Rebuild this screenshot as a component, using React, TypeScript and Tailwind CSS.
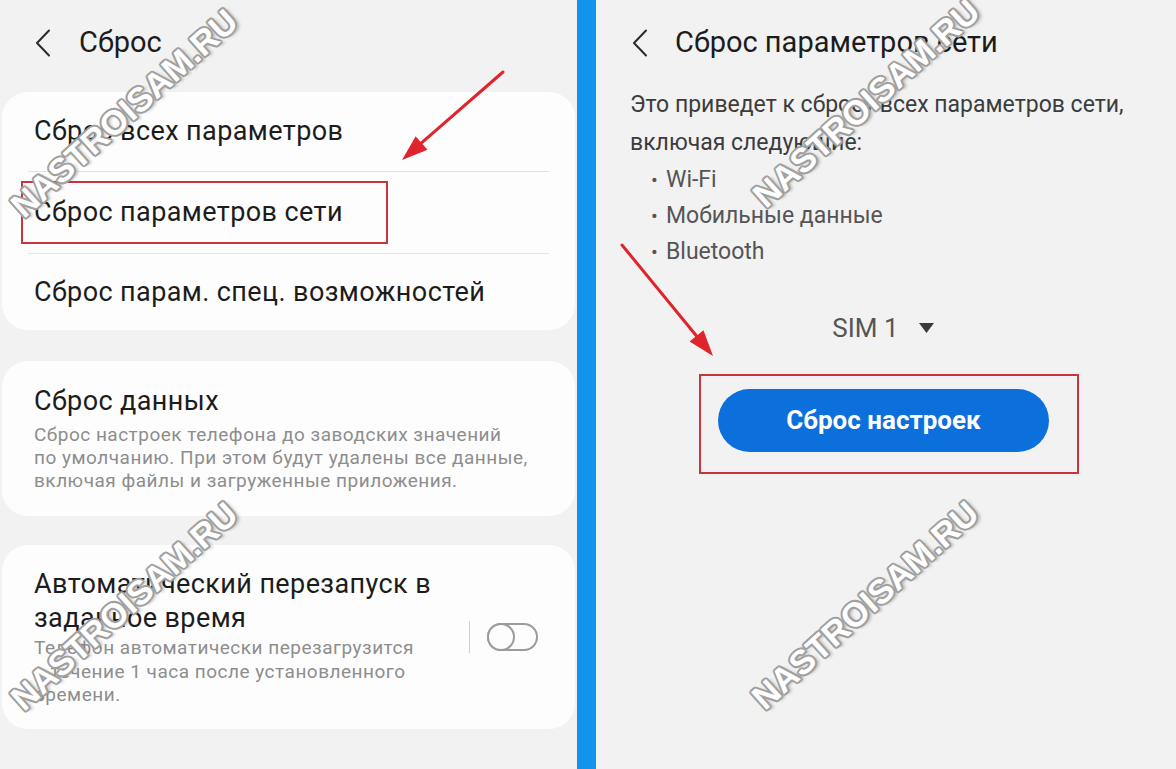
import React from 'react';

const Chevron = () => (
  <svg width="16" height="28" viewBox="0 0 16 28" fill="none" xmlns="http://www.w3.org/2000/svg">
    <path d="M14 1.5L2 14L14 26.5" stroke="#2a2a2a" strokeWidth="2" strokeLinecap="round" strokeLinejoin="round" />
  </svg>
);

interface ArrowProps {
  x1: number;
  y1: number;
  x2: number;
  y2: number;
}

// red annotation arrow, head drawn as a filled triangle
const Arrow: React.FC<ArrowProps> = ({ x1, y1, x2, y2 }) => {
  const dx = x2 - x1;
  const dy = y2 - y1;
  const len = Math.hypot(dx, dy);
  const ux = dx / len;
  const uy = dy / len;
  const hl = 26;
  const hw = 9;
  const bx = x2 - ux * hl;
  const by = y2 - uy * hl;
  const px = -uy;
  const py = ux;
  const pts = `${x2},${y2} ${bx + px * hw},${by + py * hw} ${bx - px * hw},${by - py * hw}`;
  return (
    <g>
      <line x1={x1} y1={y1} x2={bx + ux * 2} y2={by + uy * 2} stroke="#e0242b" strokeWidth="3" strokeLinecap="round" />
      <polygon points={pts} fill="#e0242b" />
    </g>
  );
};

const Watermark: React.FC<{ pos: string }> = ({ pos }) => (
  <div
    className={`absolute ${pos} -translate-x-1/2 -translate-y-1/2 -rotate-[42deg] whitespace-nowrap font-['Liberation_Sans',Arial,sans-serif] font-black text-[34px] leading-none tracking-[0.3px] text-white [text-shadow:2px_0_0_#a0a0a0,-2px_0_0_#a0a0a0,0_2px_0_#a0a0a0,0_-2px_0_#a0a0a0,1.5px_1.5px_0_#a0a0a0,-1.5px_-1.5px_0_#a0a0a0,1.5px_-1.5px_0_#a0a0a0,-1.5px_1.5px_0_#a0a0a0,3px_3px_3px_rgba(0,0,0,0.22)] select-none`}
  >
    NASTROISAM.RU
  </div>
);

export default function App() {
  return (
    <div className="relative flex w-[1176px] h-[769px] overflow-hidden font-['Roboto',sans-serif]">
      {/* left screen */}
      <div className="w-[577px] h-full bg-[#f2f2f2] flex flex-col">
        <div className="h-[86px] flex items-center pl-[35px]">
          <Chevron />
          <span className="ml-[28px] text-[29px] text-[#1c1c1c]">Сброс</span>
        </div>

        <div className="mt-[6px] mx-[2px] rounded-[26px] bg-[#fdfdfd] text-[27px] tracking-[0.4px] text-[#1c1c1c]">
          <div className="h-[79px] flex items-center px-[32px]">Сброс всех параметров</div>
          <div className="mx-[26px] h-px bg-[#e4e4e4]" />
          <div className="h-[81px] flex items-center px-[32px]">Сброс параметров сети</div>
          <div className="mx-[26px] h-px bg-[#e4e4e4]" />
          <div className="h-[76px] flex items-center px-[32px]">Сброс парам. спец. возможностей</div>
        </div>

        <div className="mt-[31px] mx-[2px] rounded-[26px] bg-[#fdfdfd] px-[32px] pt-[23px] pb-[24px]">
          <div className="text-[27px] tracking-[0.4px] leading-[34px] text-[#1c1c1c]">Сброс данных</div>
          <div className="mt-[5px] text-[19px] tracking-[0.5px] leading-[23px] text-[#8d8d8d]">
            Сброс настроек телефона до заводских значений
            <br />
            по умолчанию. При этом будут удалены все данные,
            <br />
            включая файлы и загруженные приложения.
          </div>
        </div>

        <div className="mt-[29px] mx-[2px] rounded-[26px] bg-[#fdfdfd] pl-[32px] pr-[37px] pt-[22px] pb-[22px] flex items-center">
          <div className="flex-1">
            <div className="text-[27px] tracking-[0.4px] leading-[34px] text-[#1c1c1c]">
              Автоматический перезапуск в
              <br />
              заданное время
            </div>
            <div className="mt-[1px] text-[19px] tracking-[0.5px] leading-[23.5px] text-[#8d8d8d]">
              Телефон автоматически перезагрузится
              <br />
              в течение 1 часа после установленного
              <br />
              времени.
            </div>
          </div>
          <div className="flex items-center">
            <div className="w-px h-[32px] bg-[#d0d0d0]" />
            <div className="ml-[17px] relative w-[51px] h-[28px] rounded-full border-2 border-[#9b9b9b]">
              <div className="absolute -left-[2px] -top-[2px] w-[28px] h-[28px] rounded-full border-2 border-[#9b9b9b] bg-[#fdfdfd]" />
            </div>
          </div>
        </div>
      </div>

      {/* divider bar */}
      <div className="w-[19px] h-full bg-[#1193ee]" />

      {/* right screen */}
      <div className="flex-1 h-full bg-[#f2f2f2] flex flex-col">
        <div className="h-[86px] flex items-center pl-[36px]">
          <Chevron />
          <span className="ml-[27px] text-[29px] text-[#1c1c1c]">Сброс параметров сети</span>
        </div>
        <div className="pl-[34px] text-[23px] leading-[38px] text-[#3c3c3c]">
          Это приведет к сбросу всех параметров сети,
          <br />
          включая следующие:
        </div>
        <div className="pl-[55px] text-[23px] leading-[36px] text-[#555555]">
          {['Wi-Fi', 'Мобильные данные', 'Bluetooth'].map((t) => (
            <div key={t} className="flex">
              <span className="w-[15px] text-[20px]">•</span>
              <span>{t}</span>
            </div>
          ))}
        </div>
        <div className="mt-[40px] h-[36px] flex items-center justify-center pr-[6px]">
          <span className="text-[26px] text-[#555555]">SIM 1</span>
          <svg className="ml-[20px]" width="15" height="10" viewBox="0 0 15 10">
            <polygon points="0,0 15,0 7.5,10" fill="#3a3a3a" />
          </svg>
        </div>
        <button className="mt-[43px] ml-[122px] w-[331px] h-[63px] rounded-full bg-[#0b6fdc] text-white text-[26px] font-bold">
          Сброс настроек
        </button>
      </div>

      {/* annotations */}
      <svg className="absolute inset-0 pointer-events-none" width="1176" height="769" viewBox="0 0 1176 769">
        <rect x="22" y="182" width="365" height="61" fill="none" stroke="#c9353b" strokeWidth="2" />
        <rect x="700" y="375" width="378" height="98" fill="none" stroke="#c9353b" strokeWidth="2" />
        <Arrow x1={503} y1={72} x2={402} y2={160} />
        <Arrow x1={622} y1={245} x2={713} y2={356} />
      </svg>

      <Watermark pos="left-[124px] top-[113px]" />
      <Watermark pos="left-[124px] top-[606px]" />
      <Watermark pos="left-[866px] top-[103px]" />
      <Watermark pos="left-[865px] top-[605px]" />
    </div>
  );
}
